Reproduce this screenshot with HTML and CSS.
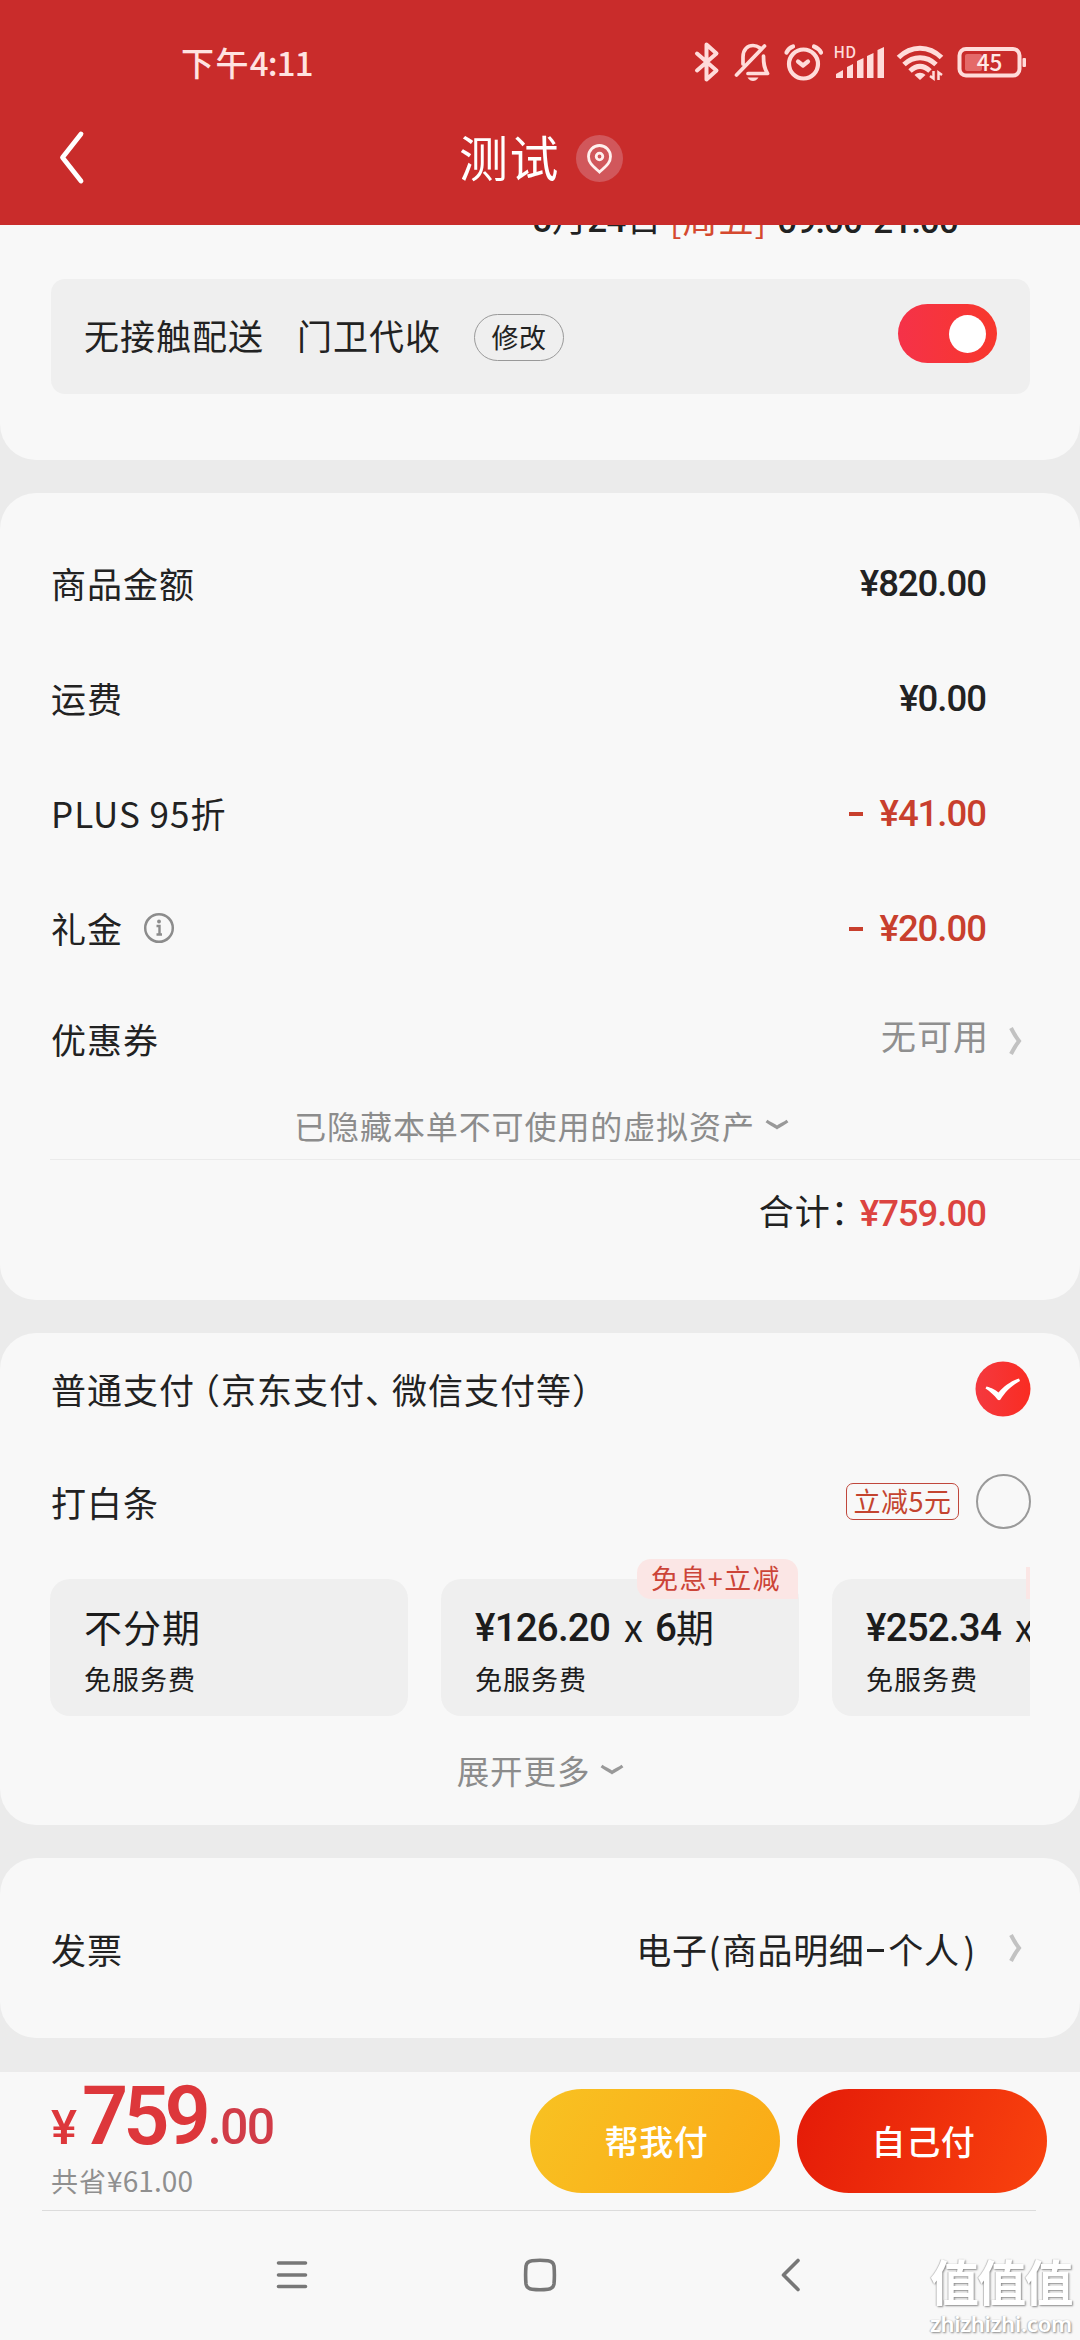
FILE: index.html
```html
<!DOCTYPE html>
<html lang="zh-CN">
<head>
<meta charset="utf-8">
<title>填写订单</title>
<link rel="stylesheet" href="styles.css">
</head>
<body>
<div class="screen">
  <header class="header">
    <div class="status">
      <span class="clock">下午<b>4:11</b></span>
      <div class="status-icons">
        <svg class="ic-bt" width="28" height="42" viewBox="693 41 28 42" fill="none" stroke="#ffdcda" stroke-width="4" stroke-linejoin="round" stroke-linecap="round"><path d="M697 53.500L716.500 70.500L706.500 79.500V44.500L716.500 53.500L697 70.500"/></svg>
        <svg class="ic-bell" width="38" height="42" viewBox="733 41 38 42" fill="none" stroke="#ffdcda" stroke-width="3.700" stroke-linejoin="round" stroke-linecap="round"><path d="M743 64V57C743 49 748 45.500 753 45.500C756 45.500 758 46.500 760 48M763.500 56C763.500 64 764 68 767.500 73.500H748M736.500 75L764.500 46"/><path d="M747.500 77.500H758.500C757 80 755 81 753 81S749 80 747.500 77.500Z" fill="#ffdcda" stroke="none"/></svg>
        <svg class="ic-alarm" width="42" height="42" viewBox="783 41 42 42" fill="none" stroke="#ffdcda" stroke-width="4.200" stroke-linecap="round" stroke-linejoin="round"><circle cx="803.500" cy="64" r="14.500"/><path d="M798 61.500L803 65.500L808 61.500"/><path d="M786.500 52.500C788 49.500 790 47.500 793 46.500M814 46.500C817.500 48 819.500 49.500 821 52.500"/></svg>
        <svg class="ic-signal" width="52" height="42" viewBox="833 41 52 42" fill="#ffdcda"><text x="833.500" y="58" class="hd">HD</text><path d="M836 78V74L843 70V78ZM847 78V67L853 64V78ZM857 78V61L863.500 58V78ZM867 78V56L873.500 53V78ZM877.500 78V50L884 47V78Z"/></svg>
        <svg class="ic-wifi" width="48" height="42" viewBox="896 41 48 42" fill="none" stroke="#ffdcda" stroke-width="5"><path d="M898.500 57.500C911 45 929 45 941.500 57.500M904 64.500C913.500 55.500 926.500 55.500 936 64.500M910 71C916.500 65 923.500 65 930 71"/><path d="M914.500 75C918 72 922 72 925.500 75L920 80Z" fill="#ffdcda" stroke="none"/><path d="M933.500 71V78.500L930 76M938.500 80V72.500L942 75" stroke-width="2.500"/></svg>
        <svg class="ic-battery" width="70" height="42" viewBox="957 41 70 42"><rect x="959.500" y="49" width="60" height="26.500" rx="6.500" fill="none" stroke="#ffdcda" stroke-width="4"/><rect x="965" y="54" width="17" height="17" rx="2" fill="#e46a69"/><rect x="1022.500" y="58" width="3.500" height="9" rx="1" fill="#ffdcda"/><text x="989.500" y="71" class="charge">45</text></svg>
      </div>
    </div>
    <div class="titlebar">
      <svg class="back" width="30" height="60" viewBox="0 0 30 60" fill="none" stroke="#fff" stroke-width="4.800" stroke-linecap="round" stroke-linejoin="round"><path d="M24 6L5.500 29.500L24 53"/></svg>
      <h1>测试</h1>
      <span class="pin"><svg width="47" height="47" viewBox="0 0 47 47" fill="none" stroke="#fff0ee" stroke-width="2.800"><path d="M23.500 37C17 31 12.500 28 12.500 21.500A11 11 0 0 1 34.500 21.500C34.500 28 30 31 23.500 37Z"/><circle cx="23.500" cy="21.500" r="3.300"/></svg></span>
    </div>
  </header>

  <main>
    <section class="card delivery">
      <div class="slot"><span class="s-date">5<i>月</i>24<i>日</i></span><span class="s-week">[周五]</span><span class="s-time">09:00-21:00</span></div>
      <div class="contactless">
        <span>无接触配送</span><span class="place">门卫代收</span><span class="edit">修改</span>
        <span class="toggle"><span class="knob"></span></span>
      </div>
    </section>

    <section class="card amounts">
      <div class="row"><span>商品金额</span><span class="num">¥820.00</span></div>
      <div class="row"><span>运费</span><span class="num">¥0.00</span></div>
      <div class="row"><span>PLUS 95折</span><span class="num minus"><i class="dash"></i>¥41.00</span></div>
      <div class="row"><span class="gift">礼金<svg width="32" height="32" viewBox="0 0 32 32" fill="none" stroke="#8c8c8c"><circle cx="16" cy="16" r="13.800" stroke-width="2.500"/><path d="M13.500 14H16.500V22M13.500 22.500H19" stroke-width="2.400"/><circle cx="16" cy="9.500" r="1.900" fill="#8c8c8c" stroke="none"/></svg></span><span class="num minus"><i class="dash"></i>¥20.00</span></div>
      <div class="row coupon"><span>优惠券</span><span class="none">无可用</span><svg class="more" width="14" height="32" viewBox="0 0 14 32" fill="none" stroke="#c2c2c2" stroke-width="4"><path d="M2 3C5 9 7 12 10 16C7 20 5 23 2 29"/></svg></div>
      <div class="hint">已隐藏本单不可使用的虚拟资产<svg width="24" height="14" viewBox="0 0 24 14" fill="none" stroke="#999" stroke-width="3.200"><path d="M1.500 3C5 5.500 8.500 7 12 9.500C15.500 7 19 5.500 22.500 3"/></svg></div>
      <div class="total"><span>合计<i>：</i></span><span class="num">¥759.00</span></div>
    </section>

    <section class="card pay">
      <div class="row method"><span>普通支付<span class="lp">（</span>京东支付<span class="dun">、</span>微信支付等）</span>
        <svg width="56" height="56" viewBox="0 0 56 56"><defs><linearGradient id="chk"><stop offset="0" stop-color="#f4393f"/><stop offset="1" stop-color="#fa2c22"/></linearGradient></defs><circle cx="28" cy="28" r="27.500" fill="url(#chk)"/><path d="M11.500 25.500C17 27 20 28.500 23.500 31.500C29 25.500 35 20.500 44 17.500L45 20C36 25 30 31 25.500 38.500Q24 40 22.500 38.500C19 34 15 30.500 10.500 27.500Z" fill="#fff"/></svg></div>
      <div class="row method"><span>打白条</span><span class="off">立减5元</span><span class="radio"></span></div>
      <div class="plans">
        <div class="plan"><div class="p-main">不分期</div><div class="p-sub">免服务费</div></div>
        <div class="plan"><span class="tag">免息+立减</span><div class="p-main"><b>¥126.20</b><span class="times">x</span><b class="term">6</b>期</div><div class="p-sub">免服务费</div></div>
        <div class="plan"><span class="tag sliver"></span><div class="p-main"><b>¥252.34</b><span class="times">x</span></div><div class="p-sub">免服务费</div></div>
      </div>
      <div class="hint expand">展开更多<svg width="24" height="14" viewBox="0 0 24 14" fill="none" stroke="#999" stroke-width="3.200"><path d="M1.500 3C5 5.500 8.500 7 12 9.500C15.500 7 19 5.500 22.500 3"/></svg></div>
    </section>

    <section class="card invoice">
      <div class="row"><span>发票</span><span class="kind">电子<i>(</i>商品明细<em></em>个人<i class="rp">)</i></span><svg class="more" width="14" height="32" viewBox="0 0 14 32" fill="none" stroke="#c2c2c2" stroke-width="4"><path d="M2 3C5 9 7 12 10 16C7 20 5 23 2 29"/></svg></div>
    </section>
  </main>

  <footer class="paybar">
    <div class="sum">
      <div class="price"><span class="yen">¥</span><span class="big">759</span><span class="cents">.00</span></div>
      <div class="saved">共省<span>¥61.00</span></div>
    </div>
    <span class="btn friend">帮我付</span>
    <span class="btn self">自己付</span>
  </footer>

  <nav class="sysnav">
    <svg width="36" height="36" viewBox="0 0 36 36" stroke="#777" stroke-width="3.600" stroke-linecap="round"><path d="M4.500 6H31.500M4.500 18H31.500M4.500 29.500H31.500"/></svg>
    <svg width="36" height="36" viewBox="0 0 36 36" fill="none" stroke="#777" stroke-width="3.600"><path d="M10 3.800Q18 2.800 26 3.800Q31.200 4.500 32 9Q32.800 18 32 27Q31.200 31.500 26 32.200Q18 33.200 10 32.200Q4.800 31.500 4 27Q3.200 18 4 9Q4.800 4.500 10 3.800Z"/></svg>
    <svg width="36" height="36" viewBox="0 0 36 36" fill="none" stroke="#777" stroke-width="3.600" stroke-linecap="round" stroke-linejoin="round"><path d="M28 3.500L13.500 18L28 32.500"/></svg>
  </nav>
  <div class="watermark"><div class="wm-cn">值值值</div><div class="wm-url">zhizhizhi.com</div></div>
</div>
</body>
</html>
```
FILE: styles.css
```css
* { box-sizing: border-box; }
body { margin: 0; background: #ebebeb; }
i, em { font-style: normal; }
svg { display: block; flex: none; }

.screen {
  position: relative;
  width: 1080px;
  height: 2340px;
  overflow: hidden;
  display: flex;
  flex-direction: column;
  background: #ebebeb;
  color: #222;
  font: 400 35px/1.4 "Noto Sans CJK SC", sans-serif;
  letter-spacing: 1px;
  white-space: nowrap;
}

/* header */
.header { flex: none; height: 225px; background: #c92c2b; color: #fff; }
.status {
  height: 91px;
  padding: 33px 53px 0 181px;
  display: flex;
  align-items: center;
  color: #ffe3e1;
}
.clock { font-size: 33px; font-weight: 500; letter-spacing: 1.4px; }
.clock b { font-weight: 500; letter-spacing: -.8px; }
.status-icons { margin-left: auto; display: flex; align-items: center; }
.ic-bell { margin-left: 12px; }
.ic-alarm { margin-left: 12px; }
.ic-signal { margin-left: 8px; }
.ic-wifi { margin-left: 11px; }
.ic-battery { margin-left: 13px; }
.hd { font: 500 15.500px "Noto Sans CJK SC", sans-serif; letter-spacing: .3px; }
.charge { font: 500 22.500px "Noto Sans CJK SC", sans-serif; letter-spacing: 0; text-anchor: middle; fill: #ffe9e7; }
.titlebar { height: 134px; display: flex; align-items: center; padding-left: 57px; }
.titlebar h1 {
  margin: -5px 0 0 372px;
  font-size: 49px;
  font-weight: 400;
  line-height: 70px;
  letter-spacing: 1.500px;
}
.pin { width: 47px; height: 47px; margin-left: 16px; border-radius: 50%; background: #d1575b; }

main { flex: none; height: 1847px; display: flex; flex-direction: column; gap: 33px; }
.card { flex: none; background: #f8f8f8; border-radius: 36px; }

.num { font-family: Roboto, sans-serif; font-weight: 500; font-size: 36.500px; letter-spacing: -1px; margin-top: 2px; }

/* delivery */
.delivery { height: 235px; border-radius: 0 0 36px 36px; overflow: hidden; }
.slot {
  height: 54px;
  padding-left: 532px;
  display: flex;
  align-items: flex-start;
  line-height: 50px;
  margin-top: -31px;
  font-weight: 400;
}
.s-date, .s-time { font-family: Roboto, "Noto Sans CJK SC", sans-serif; font-weight: 500; letter-spacing: -.8px; margin-top: 2px; }
.s-date i { font-weight: 400; margin: 0 1px; }
.s-week { color: #d5492f; margin: -1px 10px 0 8px; letter-spacing: 1px; }
.s-time { letter-spacing: -.8px; margin-top: 3px; }
.contactless {
  height: 115px;
  margin: 31px 50px 0 51px;
  padding: 0 33px 4px;
  display: flex;
  align-items: center;
  border-radius: 14px;
  background: #efefef;
}
.contactless .place { margin-left: 33px; }
.edit {
  width: 90px;
  height: 47px;
  margin-left: 33px;
  margin-top: 6px;
  border: 1.500px solid #999;
  border-radius: 24px;
  font-size: 27px;
  line-height: 43px;
  letter-spacing: .5px;
  text-align: center;
}
.toggle {
  width: 99px;
  height: 59px;
  margin-left: auto;
  margin-top: -2px;
  padding: 0 11px;
  display: flex;
  align-items: center;
  justify-content: flex-end;
  border-radius: 30px;
  background: linear-gradient(90deg, #f53249, #f8372c);
}
.knob { width: 37px; height: 38px; border-radius: 50%; background: #fff; }

/* amounts */
.row { display: flex; align-items: center; justify-content: space-between; height: 115px; padding: 0 94px 0 51px; }
.amounts { height: 807px; padding-top: 32px; }
.minus { display: flex; align-items: center; color: #c83f2d; }
.dash { width: 14px; height: 4px; margin-right: 16px; background: #c83f2d; }
.gift { display: flex; align-items: center; }
.gift svg { margin: 0 0 0 20px; }
.coupon { height: 106px; padding-right: 57px; }
.none { margin: -7px 20px 0 auto; color: #8f8f8f; }
.coupon .more { margin-top: 6px; }
.hint {
  height: 69px;
  display: flex;
  align-items: center;
  justify-content: center;
  color: #8c8c8c;
  font-size: 32px;
  letter-spacing: .9px;
}
.hint svg { margin-left: 10px; }
.amounts .hint { padding-left: 3px; height: 68px; }
.total {
  height: 100px;
  margin-left: 50px;
  padding-right: 94px;
  display: flex;
  align-items: center;
  justify-content: flex-end;
  border-top: 1px solid #ebebeb;
}
.total i { margin-right: -7px; }
.total .num { color: #dc4440; margin-top: 8px; }

/* payment */
.pay { height: 492px; }
.method { height: 111px; padding-right: 49px; }
.method + .method { height: 115px; }
.lp { margin-left: -10px; }
.dun { letter-spacing: -8px; }
.off {
  height: 37px;
  width: 113px;
  margin: 0 17px 0 auto;
  border: 1.500px solid #c0473c;
  border-radius: 7px;
  color: #c4442f;
  font-size: 27px;
  line-height: 33px;
  text-align: center;
  letter-spacing: .5px;
}
.radio { width: 55px; height: 55px; border: 2px solid #9a9a9a; border-radius: 50%; }
.plans { display: flex; gap: 33px; margin: 0 50px; padding-top: 20px; overflow: hidden; }
.plan { position: relative; flex: none; width: 358px; height: 137px; padding: 20px 34px 0; border-radius: 20px; background: #efefef; color: #1c1c1c; }
.p-main { height: 54px; font-size: 38px; line-height: 54px; display: flex; align-items: center; }
.p-main b { font: 500 38.500px/54px Roboto, sans-serif; letter-spacing: -.800px; margin-top: 4px; }
.times { margin: 0 11px 0 14px; }
.p-main .term { margin-right: 0; }
.p-sub { font-size: 27px; line-height: 44px; margin-top: 4px; }
.tag {
  position: absolute;
  top: -20px;
  right: 1px;
  width: 161px;
  height: 40px;
  padding-left: 14px;
  border-radius: 14px 14px 0 14px;
  background: #fbe6e5;
  color: #cc4438;
  font-size: 27px;
  line-height: 37px;
  letter-spacing: 1.400px;
}
.tag.sliver { top: -12px; height: 32px; width: 163px; border-radius: 0; }
.expand { height: 107px; font-size: 32.500px; padding-left: 1px; }

/* invoice */
.invoice { height: 180px; display: flex; flex-direction: column; justify-content: center; }
.invoice .row { padding-right: 57px; }
.kind { margin: 0 33px 0 auto; display: flex; align-items: center; letter-spacing: .6px; }
.kind i { margin: 0 1px; }
.kind .rp { margin: 0 0 0 4px; }
.kind em { width: 17px; height: 3px; margin: 4px 4px 0 3px; background: #222; }

/* bottom bar */
.paybar { flex: none; height: 138px; margin: 0 0 0; padding: 0 33px 0 51px; display: flex; align-items: center; background: #f8f8f8; }
.sum { flex: 1; align-self: stretch; display: flex; flex-direction: column; }
.price { height: 89px; display: flex; align-items: baseline; color: #dd373b; font-family: Roboto, sans-serif; font-weight: 500; line-height: 89px; }
.yen { font-size: 49px; }
.big { font-size: 81px; font-weight: 600; letter-spacing: -5px; margin-left: 4px; }
.cents { font-size: 50px; letter-spacing: -1.700px; margin-left: 2px; color: #d13c48; }
.saved { color: #8f8f8f; font-size: 27px; line-height: 38px; }
.saved span { letter-spacing: .1px; font-size: 28px; }
.btn {
  width: 250px;
  height: 104px;
  padding-left: 3px;
  border-radius: 52px;
  color: #fff;
  font-size: 34px;
  font-weight: 500;
  line-height: 104px;
  letter-spacing: .7px;
  text-align: center;
}
.friend { background: linear-gradient(120deg, #f8c222, #fab01a 70%, #fbaa14); }
.self { margin-left: 17px; background: linear-gradient(110deg, #e41a08, #f9430e); }
.sysnav {
  flex: 1;
  display: flex;
  align-items: flex-start;
  gap: 212px;
  padding: 47px 0 0 274px;
  background: #f8f8f8 linear-gradient(#dcdcdc, #dcdcdc) 42px 0 / 994px 1px no-repeat;
}

.watermark { position: absolute; left: 930px; top: 2250px; color: #fff; text-shadow: 1px 1px 2px #8a8a8a, -1px 0 1px #c4c4c4; }
.wm-cn { font-size: 49px; font-weight: 700; line-height: 60px; letter-spacing: -1.700px; }
.wm-url { font: 600 22px/26px "Noto Sans", sans-serif; letter-spacing: -.2px; }
```
